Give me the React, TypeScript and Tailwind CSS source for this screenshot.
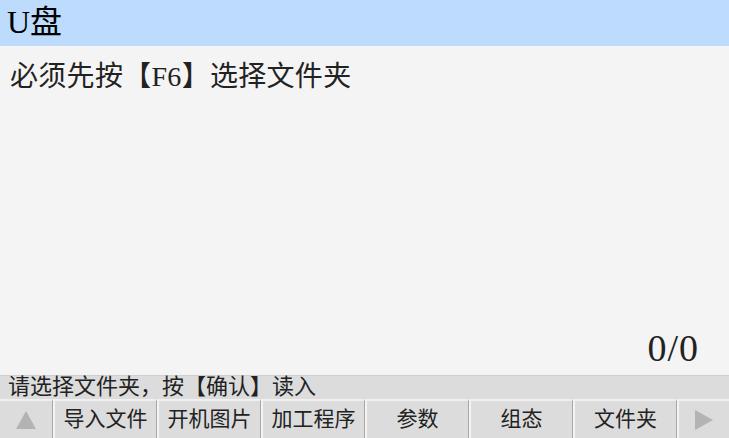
import React from "react";

const serif = { fontFamily: '"Liberation Serif", "Noto Sans CJK SC", serif' };
const sans = { fontFamily: '"DejaVu Sans", "Noto Sans CJK SC", sans-serif' };

const buttons = ["导入文件", "开机图片", "加工程序", "参数", "组态", "文件夹"];

function App() {
  return (
    <div className="w-[729px] h-[438px] flex flex-col bg-[#f4f4f4] overflow-hidden">
      <header className="h-[46px] bg-[#bcdbfd] flex items-center px-[7px] pb-[2px] text-[32px] text-black" style={serif}>
        U盘
      </header>
      <main className="flex-1 flex flex-col justify-between pl-[10px] pt-[14px] pb-[6px]">
        <p className="text-[28px] leading-[34px] text-[#222] tracking-[0.3px]" style={serif}>
          必须先按【F6】选择文件夹
        </p>
        <p className="text-right pr-[30px] text-[38px] leading-[42px] text-[#222] tracking-[1px]" style={serif}>
          0/0
        </p>
      </main>
      <div className="h-[24px] bg-[#dcdcdc] border-t border-[#cfcfcf] px-[8px] text-[22px] leading-[22px] text-[#222]" style={sans}>
        请选择文件夹，按【确认】读入
      </div>
      <nav className="h-[39px] flex bg-[#dcdcdc] text-[21px] text-[#222]" style={sans}>
        <div className="w-[53px] flex items-center justify-center border-t-2 border-r border-t-[#f0f0f0] border-r-[#a8a8a8]">
          <span className="block w-0 h-0 border-l-[10px] border-r-[10px] border-b-[18px] border-l-transparent border-r-transparent border-b-[#b3b3b3]" />
        </div>
        {buttons.map((b) => (
          <div
            key={b}
            className="w-[104px] flex items-center justify-center border-t-2 border-l-2 border-r border-t-[#f0f0f0] border-l-[#f4f4f4] border-r-[#a8a8a8]"
          >
            {b}
          </div>
        ))}
        <div className="flex-1 flex items-center justify-center border-t-2 border-l-2 border-t-[#f0f0f0] border-l-[#f4f4f4]">
          <span className="block w-0 h-0 border-t-[10px] border-b-[10px] border-l-[18px] border-t-transparent border-b-transparent border-l-[#b3b3b3]" />
        </div>
      </nav>
    </div>
  );
}

export default App;
